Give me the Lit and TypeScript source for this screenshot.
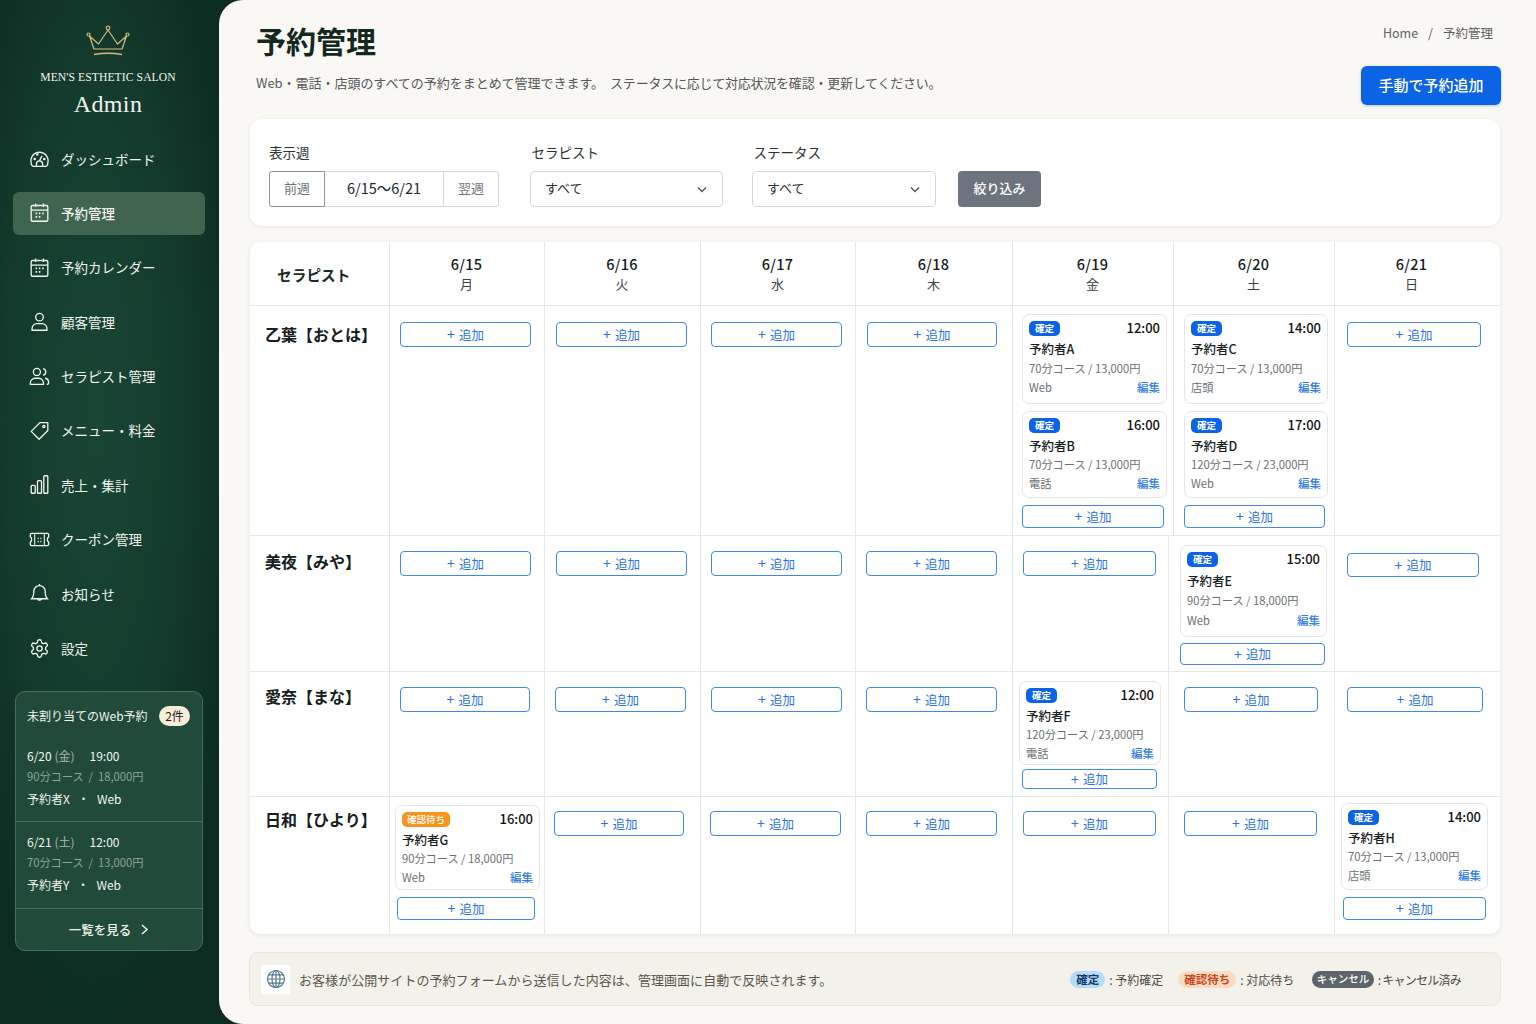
import { LitElement, html, css, svg } from "lit";
import { customElement } from "lit/decorators.js";

const ICONS: Record<string, unknown> = {
  dash: svg`<path d="M5.500 21h13a3 3 0 0 0 2.900-3.600A9.800 9.800 0 1 0 2.600 17.400 3 3 0 0 0 5.500 21z"/><path d="M8.500 21v-2.800a3.500 3.500 0 0 1 7 0V21"/><path d="M12 14.500l2.800-5.500"/><circle cx="6.500" cy="12.500" r=".7"/><circle cx="9.500" cy="7.500" r=".7"/><circle cx="17.500" cy="12.500" r=".7"/>`,
  cal: svg`<rect x="2.500" y="4" width="19" height="18" rx="1.500"/><path d="M2.500 9.200h19M7.500 1.800v4M16.500 1.800v4"/><path d="M7.500 13h1.800M11.200 13H13M15 13h1.800M7.500 17h1.800M11.200 17H13" stroke-width="1.800"/>`,
  user: svg`<circle cx="12" cy="7" r="4.300"/><path d="M3.500 22v-2a5.500 5.500 0 0 1 5.500-5.500h6a5.500 5.500 0 0 1 5.500 5.500v2z"/>`,
  users: svg`<circle cx="9" cy="6.800" r="4"/><path d="M1.500 21v-1.500a5.500 5.500 0 0 1 5.500-5.500h4a5.500 5.500 0 0 1 5.500 5.500V21z"/><path d="M16 3a3.800 3.800 0 0 1 0 7.500M18.500 14a5 5 0 0 1 4 4.800 2.200 2.200 0 0 1-2.200 2.200"/>`,
  tag: svg`<path d="M21.500 3v9L11.500 22 2.500 13 12.500 3z" stroke-linejoin="round"/><circle cx="17" cy="7.500" r="1.300"/>`,
  chart: svg`<rect x="2.500" y="13" width="4.600" height="9" rx="1"/><rect x="9.700" y="7.500" width="4.600" height="14.500" rx="1"/><rect x="16.900" y="2" width="4.600" height="20" rx="1"/>`,
  ticket: svg`<path d="M3 5h18a1.500 1.500 0 0 1 1.500 1.500V9a3 3 0 0 0-1.500 3 3 3 0 0 0 1.500 3v2.500A1.500 1.500 0 0 1 21 19H3a1.500 1.500 0 0 1-1.500-1.500V15A3 3 0 0 0 3 12a3 3 0 0 0-1.500-3V6.500A1.500 1.500 0 0 1 3 5z" stroke-linejoin="round"/><path d="M6.500 5v14M17.500 5v14M10.500 10v1.500M13.500 10v1.500M10.500 13.500V15M13.500 13.500V15" stroke-width="1.200"/>`,
  bell: svg`<path d="M12 3a6.500 6.500 0 0 0-6.500 6.500c0 5-1 7-2.500 8.500h18c-1.500-1.500-2.500-3.500-2.500-8.500A6.500 6.500 0 0 0 12 3z"/><path d="M12 1V3M9.800 18a2.300 2.300 0 0 0 4.400 0"/>`,
  gear: svg`<circle cx="12" cy="12" r="3"/><path d="M12.220 2h-.44a2 2 0 0 0-2 2v.18a2 2 0 0 1-1 1.730l-.43.250a2 2 0 0 1-2 0l-.15-.080a2 2 0 0 0-2.730.730l-.22.380a2 2 0 0 0 .730 2.730l.15.100a2 2 0 0 1 1 1.720v.510a2 2 0 0 1-1 1.740l-.15.090a2 2 0 0 0-.730 2.730l.22.380a2 2 0 0 0 2.730.730l.15-.080a2 2 0 0 1 2 0l.43.250a2 2 0 0 1 1 1.730V20a2 2 0 0 0 2 2h.44a2 2 0 0 0 2-2v-.18a2 2 0 0 1 1-1.730l.43-.250a2 2 0 0 1 2 0l.15.080a2 2 0 0 0 2.730-.730l.22-.390a2 2 0 0 0-.730-2.730l-.15-.080a2 2 0 0 1-1-1.740v-.5a2 2 0 0 1 1-1.740l.15-.090a2 2 0 0 0 .730-2.730l-.22-.380a2 2 0 0 0-2.730-.730l-.15.080a2 2 0 0 1-2 0l-.43-.250a2 2 0 0 1-1-1.730V4a2 2 0 0 0-2-2z"/>`,
};

const NAV = [
  ["dash", "ダッシュボード"],
  ["cal", "予約管理"],
  ["cal", "予約カレンダー"],
  ["user", "顧客管理"],
  ["users", "セラピスト管理"],
  ["tag", "メニュー・料金"],
  ["chart", "売上・集計"],
  ["ticket", "クーポン管理"],
  ["bell", "お知らせ"],
  ["gear", "設定"],
];

interface Booking {
  kind: "card";
  x: number;
  y: number;
  w: number;
  h: number;
  pending?: boolean;
  time: string;
  name: string;
  course: string;
  src: string;
}
interface AddBtn {
  kind: "add";
  x: number;
  y: number;
  w: number;
  h: number;
}
type Item = Booking | AddBtn;

const add = (x: number, y: number, w: number, h = 25): AddBtn => ({ kind: "add", x, y, w, h });
const card = (x: number, y: number, w: number, h: number, time: string, name: string, course: string, src: string, pending = false): Booking => ({
  kind: "card", x, y, w, h, time, name, course, src, pending,
});

const C70 = "70分コース / 13,000円";
const C90 = "90分コース / 18,000円";
const C120 = "120分コース / 23,000円";

const COLS_A = [139, 155, 156, 155, 157, 161, 161, 166];
const COLS_B = [139, 155, 156, 155, 157, 156, 166, 166];

const DAYS = [["6/15", "月"], ["6/16", "火"], ["6/17", "水"], ["6/18", "木"], ["6/19", "金"], ["6/20", "土"], ["6/21", "日"]];

const ROWS: { name: string; nameTop: number; h: number; cols: number[]; cells: Item[][] }[] = [
  {
    name: "乙葉【おとは】", nameTop: 16, h: 229, cols: COLS_A,
    cells: [
      [add(11, 16, 131)], [add(12, 16, 131)], [add(11, 16, 131)], [add(12, 16, 130)],
      [card(10, 8, 145, 90, "12:00", "予約者A", C70, "Web"), card(10, 7, 145, 87, "16:00", "予約者B", C70, "電話"), add(10, 7, 142, 23)],
      [card(11, 8, 144, 90, "14:00", "予約者C", C70, "店頭"), card(11, 7, 144, 87, "17:00", "予約者D", C120, "Web"), add(11, 7, 141, 23)],
      [add(13, 16, 134)],
    ],
  },
  {
    name: "美夜【みや】", nameTop: 14, h: 136, cols: COLS_B,
    cells: [
      [add(11, 16, 131)], [add(12, 16, 131)], [add(11, 16, 131)], [add(11, 16, 131)], [add(11, 16, 133)],
      [card(12, 10, 147, 92, "15:00", "予約者E", C90, "Web"), add(12, 6, 145, 22)],
      [add(13, 18, 132, 24)],
    ],
  },
  {
    name: "愛奈【まな】", nameTop: 13, h: 125, cols: COLS_B,
    cells: [
      [add(11, 16, 130)], [add(11, 16, 131)], [add(11, 16, 131)], [add(11, 16, 131)],
      [card(7, 10, 142, 84, "12:00", "予約者F", C120, "電話"), add(10, 4, 135, 20)],
      [add(16, 16, 134)],
      [add(13, 16, 136)],
    ],
  },
  {
    name: "日和【ひより】", nameTop: 11, h: 138, cols: COLS_B,
    cells: [
      [card(6, 9, 145, 85, "16:00", "予約者G", C90, "Web", true), add(8, 7, 138, 23)],
      [add(10, 15, 130)], [add(10, 15, 131)], [add(11, 15, 131)], [add(11, 15, 133)], [add(16, 15, 133)],
      [card(7, 7, 147, 87, "14:00", "予約者H", C70, "店頭"), add(9, 7, 143, 23)],
    ],
  },
];

@customElement("app-root")
export class AppRoot extends LitElement {
  static styles = css`
    :host {
      display: flex;
      width: 1536px;
      height: 1024px;
      overflow: hidden;
      font-family: "Noto Sans CJK JP", "Noto Sans", sans-serif;
      color: #1b2a26;
      background: radial-gradient(ellipse 150px 620px at 95px 420px, #1a4636 0%, #133a2c 60%, #0c2c21 100%);
    }
    * { box-sizing: border-box; }

    .side { width: 219px; flex: none; display: flex; flex-direction: column; color: #f1f3ef; }
    .logo { height: 138px; display: flex; flex-direction: column; align-items: center; padding: 25px 3px 0 0; font-family: "Liberation Serif", serif; }
    .logo svg { width: 44px; height: 32px; display: block; }
    .logo .salon { font-size: 11.600px; line-height: 16px; margin-top: 13px; letter-spacing: 0.1px; }
    .logo .admin { font-size: 24px; line-height: 30px; margin-top: 3px; letter-spacing: 0.4px; }
    nav { display: flex; flex-direction: column; gap: 11.400px; padding: 0 14px 0 13px; }
    .nav { height: 43px; display: flex; align-items: center; gap: 11px; padding: 0 0 2px 16px; font-size: 13.500px; border-radius: 6px; }
    .nav svg { width: 21px; height: 21px; fill: none; stroke: #f4f5f1; stroke-width: 1.500; flex: none; }
    .nav.on { background: #40654f; font-weight: 500; }

    .pending { margin: 20px 16px 0 15px; height: 260px; border: 1px solid #4a6c5c; border-radius: 10px; background: #214a3a; font-size: 12px; display: flex; flex-direction: column; }
    .pending .head { height: 48px; display: flex; align-items: center; justify-content: space-between; padding: 0 12px 0 11px; font-size: 12px; }
    .pill { background: #f6ecd8; color: #23241f; border-radius: 10px; width: 31px; height: 20px; display: flex; align-items: center; justify-content: center; font-size: 12px; }
    .req { padding: 5px 11px 0; height: 81px; line-height: 21.500px; }
    .req + .req { border-top: 1px solid #4a6c5c; height: 87px; padding-top: 9px; }
    .req .date span { color: #a8b8ae; }
    .req .date b { font-weight: 400; margin-left: 15px; }
    .req .course { color: #8fa598; word-spacing: 2.500px; }
    .req .who b { font-weight: 400; margin: 0 7.500px; color: #dfe6e0; }
    .more { flex: 1; border-top: 1px solid #4a6c5c; display: flex; align-items: center; justify-content: center; gap: 9px; font-size: 12.500px; font-weight: 500; }
    .more svg { width: 9px; height: 11px; fill: none; stroke: #f1f3ef; stroke-width: 1.500; }

    main { flex: 1; min-width: 0; background: #f9f8f4; border-radius: 24px 0 0 24px; padding: 0 36px 0 31px; display: flex; flex-direction: column; }
    header { height: 119px; display: flex; justify-content: space-between; flex: none; }
    .ttl { padding: 18px 0 0 6px; }
    h1 { margin: 0; font-size: 30px; line-height: 44px; font-weight: 700; color: #15281f; }
    .ttl p { margin: 11px 0 0; font-size: 13px; line-height: 20px; color: #55595a; letter-spacing: -0.030px; }
    .ttl p span { margin-left: 6px; letter-spacing: -0.230px; }
    .acts { display: flex; flex-direction: column; align-items: flex-end; padding-top: 24px; margin-right: -1px; }
    .crumb { font-size: 12.500px; line-height: 18px; color: #5d6263; margin: 0 8px 24px 0; display: flex; gap: 10px; }
    .primary { width: 140px; height: 39px; border: 0; border-radius: 6px; background: #0b63e6; color: #fff; padding: 0 0 2px; font: 500 15px "Noto Sans CJK JP", sans-serif; box-shadow: 0 1px 3px rgba(11, 99, 230, .3); }

    .filter { height: 107px; flex: none; background: #fff; border-radius: 12px; box-shadow: 0 1px 4px rgba(40, 40, 30, .08); padding: 24px 19px 19px; display: flex; align-items: flex-end; }
    .field label { display: block; font-size: 13.500px; line-height: 18px; margin-bottom: 10px; color: #2b3331; }
    .field.shift label { margin-left: 1.500px; }
    .week { display: flex; width: 230px; height: 36px; font-size: 13px; }
    .week div { display: flex; align-items: center; justify-content: center; padding-bottom: 3px; border: 1px solid #d5d9dd; color: #6c7378; }
    .week .prev { width: 56px; border-color: #8b979f; border-radius: 3px 0 0 3px; }
    .week .cur { flex: 1; border-left: 0; border-right: 0; color: #20282a; font-size: 14.500px; }
    .week .next { width: 56px; border-radius: 0 3px 3px 0; }
    .select { height: 36px; border: 1px solid #d5d9dd; border-radius: 4px; display: flex; align-items: center; justify-content: space-between; padding: 0 15px 3px 14px; font-size: 13px; color: #2b3331; }
    .select svg { width: 10px; height: 7px; margin-top: 3px; fill: none; stroke: #4c5356; stroke-width: 1.300; }
    .go { width: 83px; height: 36px; margin-left: 22px; border: 0; border-radius: 4px; background: #6c757d; color: #fff; padding: 0 0 3px; font: 500 13px "Noto Sans CJK JP", sans-serif; }

    .table { margin-top: 16px; height: 692px; flex: none; background: #fff; border-radius: 10px; box-shadow: 0 1px 4px rgba(40, 40, 30, .1); overflow: hidden; }
    .row { display: grid; box-shadow: 0 1px #e6e8e8; }
    .row:first-child { box-shadow: none; border-bottom: 1px solid #e6e8e8; }
    .row:last-child { box-shadow: none; }
    .row > div + div { box-shadow: inset 1px 0 #e6e8e8; }
    .th { display: flex; flex-direction: column; align-items: center; justify-content: center; height: 63px; padding-bottom: 2px; }
    .th:last-child { padding-right: 11px; }
    .th b { font-size: 14.500px; line-height: 21px; font-weight: 500; letter-spacing: .3px; color: #15201d; }
    .th span { font-size: 13px; line-height: 19px; color: #3a4342; }
    .th.corner { align-items: flex-start; padding: 1px 0 0 27px; font-size: 14.600px; font-weight: 700; letter-spacing: .1px; }
    .who-cell { padding-left: 15px; font-size: 16px; font-weight: 700; line-height: 24px; color: #15201d; }
    .cell { min-width: 0; }

    .add { display: flex; align-items: center; justify-content: center; gap: 4px; border: 1px solid #4088ec; border-radius: 4px; color: #2c74dc; font-size: 12.500px; background: #fff; padding-bottom: 1px; }
    .add i { font-style: normal; font-size: 14px; line-height: 1; }

    .bk { border: 1px solid #e4e6e8; border-radius: 7px; padding: 5px 6px 6px 6px; display: flex; flex-direction: column; justify-content: space-between; background: #fff; }
    .bk > div { height: 19px; line-height: 19px; flex: none; display: flex; justify-content: space-between; align-items: center; white-space: nowrap; }
    .bk > div:first-child { margin: -1px 0 1px; }
    .badge { height: 15px; line-height: 14px; padding: 0 6px; border-radius: 5px; background: #0b63e6; color: #fff; font-size: 9.500px; font-weight: 700; }
    .badge.pend { background: #f7941d; font-weight: 500; padding: 0 5px; }
    .time { font-size: 13px; font-weight: 500; color: #111; margin-top: -2px; }
    .name { font-size: 12.500px; font-weight: 500; color: #15201d; }
    .course, .src { font-size: 11.200px; color: #6a7072; }
    .edit { font-size: 11.500px; color: #2f7de8; font-weight: 500; }

    .foot { margin: 18px -1px 0; height: 54px; flex: none; background: #f2f1ea; border: 1px solid #e8e6dc; border-radius: 9px; display: flex; align-items: center; padding: 0 39px 0 11px; font-size: 13px; letter-spacing: .05px; color: #5a564d; }
    .globe { width: 29px; height: 29px; background: #fff; border-radius: 3px; display: flex; align-items: center; justify-content: center; margin-right: 9px; }
    .globe svg { width: 20px; height: 20px; fill: none; stroke: #55788a; stroke-width: 1.200; }
    .legend { margin-left: auto; display: flex; align-items: center; font-size: 12px; letter-spacing: 0; color: #4b4a45; }
    .legend span { height: 17px; line-height: 16px; border-radius: 9px; padding: 0 6px; font-size: 11.500px; font-weight: 700; margin-right: 4px; }
    .legend em { font-style: normal; margin-right: 15px; }
    .legend em:nth-of-type(2) { margin-right: 18px; }
    .legend em:last-child { margin-right: 0; letter-spacing: -.75px; }
    .l1 { background: #b6dbf8; color: #12386b; }
    .l2 { background: #fbdcc3; color: #c8481a; }
    .legend .l3 { background: #5d646c; color: #fff; font-size: 10.500px; font-weight: 500; padding: 0 4.500px; }
  `;

  renderItem(it: Item) {
    const pos = `margin-left:${it.x}px;margin-top:${it.y}px;width:${it.w}px;height:${it.h}px`;
    if (it.kind === "add") {
      return html`<div class="add" style=${pos}><i>+</i>追加</div>`;
    }
    return html`<div class="bk" style=${pos}>
      <div>
        <span class="badge ${it.pending ? "pend" : ""}">${it.pending ? "確認待ち" : "確定"}</span>
        <span class="time">${it.time}</span>
      </div>
      <div class="name">${it.name}</div>
      <div class="course">${it.course}</div>
      <div><span class="src">${it.src}</span><span class="edit">編集</span></div>
    </div>`;
  }

  render() {
    return html`
      <aside class="side">
        <div class="logo">
          <svg viewBox="0 0 44 32" fill="none" stroke="#d8b877" stroke-width="1.200">
            <circle cx="22" cy="3" r="1.800"/><circle cx="2.500" cy="9.500" r="1.500"/><circle cx="41.500" cy="9.500" r="1.500"/>
            <path d="M22 5l-9.500 14L3.500 11 8 24h28l4.500-13-9 8z" stroke-linejoin="round"/>
            <path d="M8 29.500c9-1.600 19-1.600 28 0" stroke-width="1.400"/>
          </svg>
          <div class="salon">MEN'S ESTHETIC SALON</div>
          <div class="admin">Admin</div>
        </div>
        <nav>
          ${NAV.map(
            ([ic, label], i) => html`<div class="nav ${i === 1 ? "on" : ""}">
              <svg viewBox="0 0 24 24">${ICONS[ic]}</svg>${label}
            </div>`
          )}
        </nav>
        <div class="pending">
          <div class="head">未割り当てのWeb予約<span class="pill">2件</span></div>
          <div class="req">
            <div class="date">6/20 <span>(金)</span><b>19:00</b></div>
            <div class="course">90分コース / 18,000円</div>
            <div class="who">予約者X<b>・</b>Web</div>
          </div>
          <div class="req">
            <div class="date">6/21 <span>(土)</span><b>12:00</b></div>
            <div class="course">70分コース / 13,000円</div>
            <div class="who">予約者Y<b>・</b>Web</div>
          </div>
          <div class="more">一覧を見る<svg viewBox="0 0 9 11"><path d="M2 1l5 4.500L2 10"/></svg></div>
        </div>
      </aside>
      <main>
        <header>
          <div class="ttl">
            <h1>予約管理</h1>
            <p>Web・電話・店頭のすべての予約をまとめて管理できます。<span>ステータスに応じて対応状況を確認・更新してください。</span></p>
          </div>
          <div class="acts">
            <div class="crumb"><span>Home</span><span>/</span><span>予約管理</span></div>
            <button class="primary">手動で予約追加</button>
          </div>
        </header>
        <section class="filter">
          <div class="field">
            <label>表示週</label>
            <div class="week"><div class="prev">前週</div><div class="cur">6/15〜6/21</div><div class="next">翌週</div></div>
          </div>
          <div class="field shift" style="margin-left:31px">
            <label>セラピスト</label>
            <div class="select" style="width:193px">すべて<svg viewBox="0 0 10 7"><path d="M1 1.500l4 4 4-4"/></svg></div>
          </div>
          <div class="field shift" style="margin-left:29px">
            <label>ステータス</label>
            <div class="select" style="width:184px">すべて<svg viewBox="0 0 10 7"><path d="M1 1.500l4 4 4-4"/></svg></div>
          </div>
          <button class="go">絞り込み</button>
        </section>
        <section class="table">
          <div class="row" style="grid-template-columns:${COLS_A.map((c) => c + "px").join(" ")}">
            <div class="th corner">セラピスト</div>
            ${DAYS.map(([d, w]) => html`<div class="th"><b>${d}</b><span>${w}</span></div>`)}
          </div>
          ${ROWS.map(
            (r) => html`<div class="row" style="height:${r.h}px;grid-template-columns:${r.cols.map((c) => c + "px").join(" ")}">
              <div class="who-cell" style="padding-top:${r.nameTop}px">${r.name}</div>
              ${r.cells.map((items) => html`<div class="cell">${items.map((it) => this.renderItem(it))}</div>`)}
            </div>`
          )}
        </section>
        <section class="foot">
          <div class="globe">
            <svg viewBox="0 0 20 20"><circle cx="10" cy="10" r="8.500"/><ellipse cx="10" cy="10" rx="4" ry="8.500"/><path d="M10 1.500v17M1.500 10h17M2.800 5.800h14.400M2.800 14.200h14.400"/></svg>
          </div>
          お客様が公開サイトの予約フォームから送信した内容は、管理画面に自動で反映されます。
          <div class="legend">
            <span class="l1">確定</span><em>: 予約確定</em>
            <span class="l2">確認待ち</span><em>: 対応待ち</em>
            <span class="l3">キャンセル</span><em>: キャンセル済み</em>
          </div>
        </section>
      </main>
    `;
  }
}
